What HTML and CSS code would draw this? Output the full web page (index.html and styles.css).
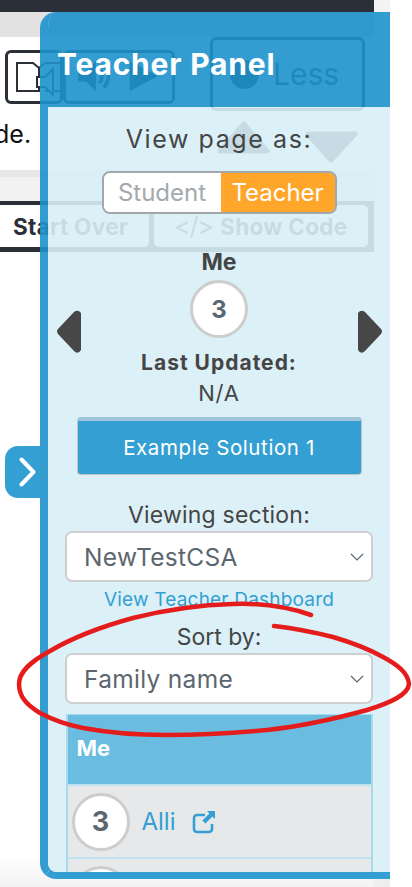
FILE: index.html
```html
<!DOCTYPE html>
<html lang="en">
<head>
<meta charset="utf-8">
<title>Teacher Panel</title>
<link rel="stylesheet" href="styles.css">
</head>
<body>
<div class="stage">
  <div class="backdrop">
  <div class="page">
    <div class="topbar"></div>
    <div class="greyband"></div>
    <div class="toolrow">
      <div class="iconbtn">
        <svg class="bookicon" viewBox="0 0 58 52" width="58" height="52"><path d="M10 12h16l6 5v23H10zM32 17l6-5h16v28H38" fill="none" stroke="#2a2f38" stroke-width="2"/><path d="M30 26h8l8-8v26l-8-8h-8z" fill="#fff" stroke="#2a2f38" stroke-width="2"/></svg>
      </div>
      <div class="speakerbtn">
        <svg viewBox="0 0 112 53" width="106" height="47"><path d="M10 20h9l11-11v34l-11-11h-9z" fill="#2a2f38"/><path d="M34 18q6 8 0 16M39 13q10 13 0 26" fill="none" stroke="#2a2f38" stroke-width="4"/><path d="M68 9l32 17-32 17z" fill="#2a2f38"/></svg>
      </div>
      <div class="lessbtn"><span class="lessdot"></span><span class="lesstext">Less</span></div>
    </div>
    <div class="textrow">
      <span class="lead">de.</span>
      <svg class="arrows" viewBox="0 0 141 42" width="141" height="42"><path d="M3 30L27 3l23 27z" fill="#2a2f38" stroke="#2a2f38" stroke-width="5" stroke-linejoin="round"/><path d="M91 13h47l-24 26z" fill="#2a2f38" stroke="#2a2f38" stroke-width="5" stroke-linejoin="round"/></svg>
    </div>
    <div class="band1"></div>
    <div class="band2"></div>
    <div class="btnbar">
      <div class="barbtn startover">Start Over</div>
      <div class="barbtn showcode"><span class="codeglyph">&lt;/&gt;</span><span>Show Code</span></div>
    </div>
    <div class="pagefill"></div>
  </div>
  <div class="strip"></div>
  </div>

  <aside class="panel">
    <header class="panelhead">Teacher Panel</header>
    <div class="panelbody">
      <div class="label viewas">View page as:</div>
      <div class="toggle">
        <span class="tog togstudent">Student</span>
        <span class="tog togteacher">Teacher</span>
      </div>
      <div class="mehead">Me</div>
      <div class="navrow">
        <svg viewBox="0 0 26 43" width="26" height="43"><path d="M25 3v37q-3 5-7 1L2 24q-2-3 0-5L18 2q4-3 7 1z" fill="#474747"/></svg>
        <div class="centercol">
          <div class="bubble">3</div>
          <div class="updated">Last Updated:</div>
          <div class="na">N/A</div>
        </div>
        <svg viewBox="0 0 26 43" width="26" height="43"><path d="M1 3v37q3 5 7 1l16-17q2-3 0-5L8 2Q4-1 1 3z" fill="#474747"/></svg>
      </div>
      <div class="solution">Example Solution 1</div>
      <div class="label section">Viewing section:</div>
      <div class="select"><span>NewTestCSA</span><svg viewBox="0 0 14 8" width="14" height="8"><path d="M1 1l6 6 6-6" fill="none" stroke="#5b6770" stroke-width="1.2"/></svg></div>
      <a class="dash">View Teacher Dashboard</a>
      <div class="label sort">Sort by:</div>
      <div class="select"><span>Family name</span><svg viewBox="0 0 14 8" width="14" height="8"><path d="M1 1l6 6 6-6" fill="none" stroke="#5b6770" stroke-width="1.2"/></svg></div>
      <div class="table">
        <div class="thead">Me</div>
        <div class="trow">
          <div class="bubble small">3</div>
          <a class="student">Alli</a>
          <svg viewBox="0 0 24 24" width="24" height="24"><path d="M13 5H5a3 3 0 0 0-3 3v11a3 3 0 0 0 3 3h12a3 3 0 0 0 3-3v-5" fill="none" stroke="#349fd2" stroke-width="2.6"/><path d="M15 1h8v8l-2.6-2.6-7 7-3-3 7-7z" fill="#349fd2"/></svg>
        </div>
        <div class="trow"><div class="bubble small"></div></div>
      </div>
    </div>
  </aside>

  <div class="tab">
    <svg viewBox="0 0 17 30" width="17" height="30"><path d="M2.5 2.5L14.5 15 2.5 27.5" fill="none" stroke="#fff" stroke-width="4" stroke-linecap="round" stroke-linejoin="round"/></svg>
  </div>

  <svg class="scribble" viewBox="0 0 412 887" width="412" height="887">
    <path d="M311 615C285 606 258 603 233 604C195 605 165 610 133 618C100 627 72 638 50 651C30 662 19 672 19 684C19 697 27 705 40 713C55 721 68 725 83 728C110 733 138 735 167 735C200 735 235 733 267 730C305 726 338 718 367 710C390 703 408 695 409 684C408 672 396 664 383 657C367 648 350 642 333 637C313 632 292 628 274 626" fill="none" stroke="#e41c1c" stroke-width="4.5" stroke-linecap="round"/>
  </svg>
</div>
</body>
</html>
```
FILE: styles.css
```css
* { box-sizing: border-box; }
html, body { margin: 0; padding: 0; background: #fff; }
body { width: 412px; height: 887px; overflow: hidden; font-family: Inter, "Open Sans", sans-serif; color: #454545; }
.stage { position: relative; width: 412px; height: 887px; overflow: hidden; }
.backdrop { display: flex; width: 390px; height: 887px; }
.page { width: 374px; height: 887px; display: flex; flex-direction: column; flex: none; background: linear-gradient(#fff 855px, #f3f3f3 887px); }
.strip { flex: 1; background: linear-gradient(#f3f3f3 12px, #fff 12px, #fff 879px, #eee 879px); }
.topbar { height: 12px; background: #2a2f38; flex: none; }
.greyband { height: 25px; background: #e2e2e2; flex: none; }
.toolrow { height: 73px; flex: none; display: flex; align-items: flex-start; padding-left: 5px; background: #fff; }
.iconbtn { width: 58px; height: 54px; margin-top: 13px; border: 3px solid #2a2f38; border-radius: 6px; overflow: hidden; flex: none; }
.bookicon { display: block; margin: -2px 0 0 -1px; }
.speakerbtn { width: 112px; height: 54px; margin-top: 13px; border: 3px solid #2a2f38; border-radius: 6px; flex: none; }
.lessbtn { width: 155px; height: 74px; margin-left: 35px; border: 3px solid #2a2f38; border-radius: 6px; display: flex; align-items: center; gap: 14px; padding-left: 17px; flex: none; }
.lessdot { width: 29px; height: 29px; border-radius: 50%; background: #2a2f38; }
.lesstext { font-size: 30px; color: #2a2f38; }
.textrow { height: 60px; flex: none; display: flex; align-items: flex-start; justify-content: space-between; padding: 11px 16px 0 0; }
.lead { font-size: 25px; line-height: 26px; color: #111; margin: 0 0 0 -6px; }
.arrows { display: block; }
.band1 { height: 7px; background: #e6e6e6; flex: none; }
.band2 { height: 24px; background: #f2f2f2; flex: none; }
.btnbar { height: 51px; background: #2a2f38; flex: none; display: flex; gap: 5px; padding: 4px 6px 5px 0; }
.barbtn { background: #fff; border-radius: 0 5px 5px 0; font-weight: 700; font-size: 22.5px; color: #2a2f38; display: flex; align-items: center; letter-spacing: .3px; }
.startover { width: 149px; padding-left: 13px; }
.showcode { flex: 1; padding-left: 20px; gap: 7px; border-radius: 5px; }
.codeglyph { font-weight: 400; font-size: 25px; letter-spacing: -1px; }
.pagefill { flex: 1; }

.panel { position: absolute; left: 40px; top: 12px; width: 350px; height: 867px; border-left: 8px solid rgba(29,146,204,.9); border-bottom: 7px solid #349ed2; border-radius: 16px 0 0 16px; overflow: hidden; display: flex; flex-direction: column; }
.panelhead { height: 95px; flex: none; margin-left: -8px; background: rgba(29,146,204,.9); color: #fff; font-weight: 700; font-size: 30px; letter-spacing: .8px; padding: 35px 0 0 17px; line-height: 34px; }
.panelbody { flex: 1; min-height: 0; overflow: hidden; background: rgba(216,238,247,.9); display: flex; flex-direction: column; align-items: center; padding: 0 17px 0 17px; }
.label { font-size: 23px; line-height: 26px; text-align: center; color: #454545; flex: none; }
.viewas { margin-top: 19px; font-size: 25px; letter-spacing: 1.6px; }
.toggle { display: flex; width: 235px; height: 43px; margin-top: 19px; border: 2px solid #a3a7a9; border-radius: 8px; overflow: hidden; flex: none; }
.tog { font-size: 24px; display: flex; align-items: center; justify-content: center; }
.togstudent { width: 117px; background: #fff; color: #a3a9ad; }
.togteacher { flex: 1; background: #ffa62b; color: #fff; }
.mehead { font-weight: 700; font-size: 23px; line-height: 26px; margin-top: 35px; flex: none; }
.navrow { width: 327px; display: flex; justify-content: space-between; align-items: flex-start; flex: none; margin-top: 5px; }
.navrow svg { margin-top: 30px; }
.centercol { display: flex; flex-direction: column; align-items: center; }
.bubble { width: 58px; height: 58px; border: 3px solid #cdcdcd; border-radius: 50%; background: #fff; display: flex; align-items: center; justify-content: center; font-weight: 700; font-size: 24px; color: #5b6770; flex: none; }
.updated { font-weight: 700; font-size: 21px; letter-spacing: 1px; line-height: 24px; margin-top: 13px; white-space: nowrap; }
.na { font-size: 22px; letter-spacing: .8px; line-height: 24px; margin-top: 6px; }
.solution { width: 285px; height: 58px; margin-top: 12px; background: #349fd2; border: 1px solid #c0c5c9; border-top: 4px solid #9fc3d8; border-radius: 4px; color: #fff; font-size: 20.5px; letter-spacing: .6px; display: flex; align-items: center; justify-content: center; flex: none; }
.section { margin-top: 27px; letter-spacing: .2px; }
.select { width: 308px; height: 51px; margin-top: 3px; background: #fff; border: 2px solid #cfcfcf; border-radius: 7px; display: flex; align-items: center; justify-content: space-between; padding: 0 7px 0 17px; font-size: 24.5px; letter-spacing: .3px; color: #5b6770; flex: none; }
.dash { font-size: 19px; letter-spacing: .2px; line-height: 24px; margin-top: 6px; color: #349fd2; flex: none; }
.sort { margin-top: 12px; }
.table { width: 307px; margin-top: 10px; border: 1px solid #a9d9ec; border-width: 1px 2px; flex: none; }
.thead { height: 69px; background: #6abde0; color: #fff; font-weight: 700; font-size: 22px; padding: 20px 0 0 9px; line-height: 26px; }
.trow { height: 73px; background: #e7e8ea; border-top: 2px solid #bfe2f0; display: flex; align-items: center; gap: 12px; padding-left: 4px; }
.bubble.small { font-size: 27px; }
.student { font-size: 24px; color: #349fd2; margin-right: 4px; }

.tab { position: absolute; left: 5px; top: 446px; width: 35px; height: 52px; background: #349fd2; border-radius: 13px 0 0 13px; display: flex; align-items: center; justify-content: flex-end; padding-right: 4px; }
.scribble { position: absolute; left: 0; top: 0; overflow: visible; pointer-events: none; }
```
